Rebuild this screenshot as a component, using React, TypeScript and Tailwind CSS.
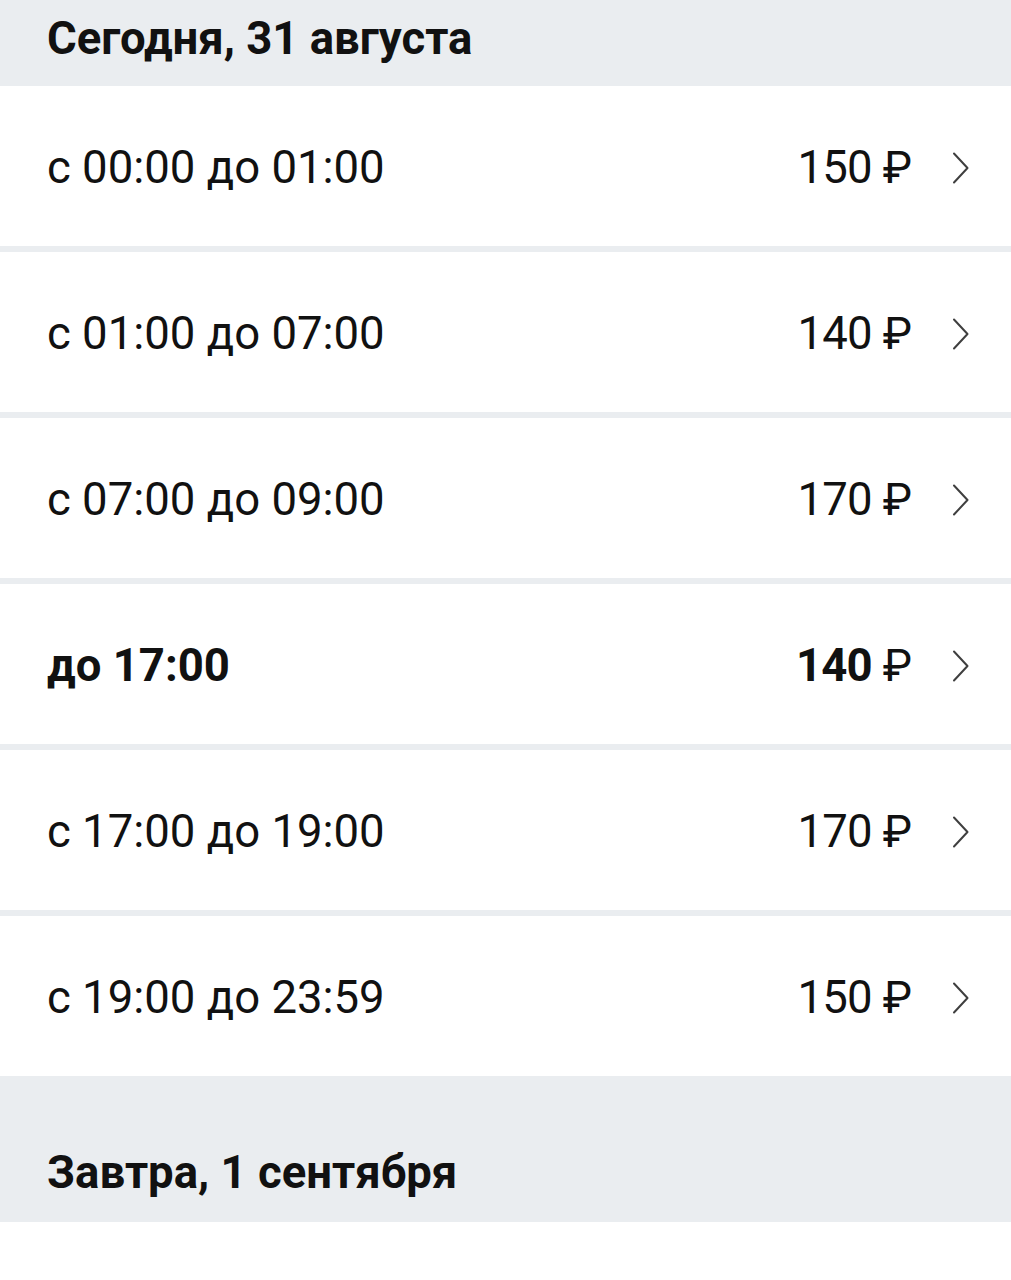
const slots = [
  { label: 'с 00:00 до 01:00', price: '150' },
  { label: 'с 01:00 до 07:00', price: '140' },
  { label: 'с 07:00 до 09:00', price: '170' },
  { label: 'до 17:00', price: '140', bold: true },
  { label: 'с 17:00 до 19:00', price: '170' },
  { label: 'с 19:00 до 23:59', price: '150' },
]

function Chevron() {
  return (
    <svg width="18" height="32" viewBox="0 0 18 32" fill="none" className="shrink-0">
      <path d="M2 1.5 L15.5 16 L2 30.5" stroke="#3f3f3f" strokeWidth="2" strokeLinecap="round" strokeLinejoin="round" />
    </svg>
  )
}

function Slot({ label, price, bold }: { label: string; price: string; bold?: boolean }) {
  return (
    <div className="h-[160px] bg-white flex items-center pt-[4px] pl-[47px] pr-[41px] text-[#111] text-[45.5px] leading-none">
      <span className={bold ? 'font-bold' : ''}>{label}</span>
      <span className="ml-auto flex items-baseline">
        <span className={bold ? 'font-bold tracking-[-0.8px]' : 'tracking-[-0.8px]'}>{price}</span>
        <span className="ml-[11px] text-[44px]">₽</span>
      </span>
      <span className="ml-[40px] flex items-center">
        <Chevron />
      </span>
    </div>
  )
}

export default function App() {
  return (
    <div className="w-[1011px] min-h-[1280px] bg-white" style={{ fontFamily: 'Roboto, "Noto Sans", sans-serif' }}>
      <div className="h-[86px] bg-[#eaedf0] flex items-end pl-[47px] pb-[25px]">
        <h2 className="text-[45.5px] font-bold leading-none text-[#111]">Сегодня, 31 августа</h2>
      </div>

      <div className="flex flex-col gap-[6px] bg-[#eaedf0]">
        {slots.map((s) => (
          <Slot key={s.label} {...s} />
        ))}
      </div>

      <div className="h-[146px] bg-[#eaedf0] flex items-end pl-[47px] pb-[27px]">
        <h2 className="text-[45.5px] font-bold leading-none text-[#111]">Завтра, 1 сентября</h2>
      </div>

      <div className="h-[57px] bg-white" />
    </div>
  )
}
